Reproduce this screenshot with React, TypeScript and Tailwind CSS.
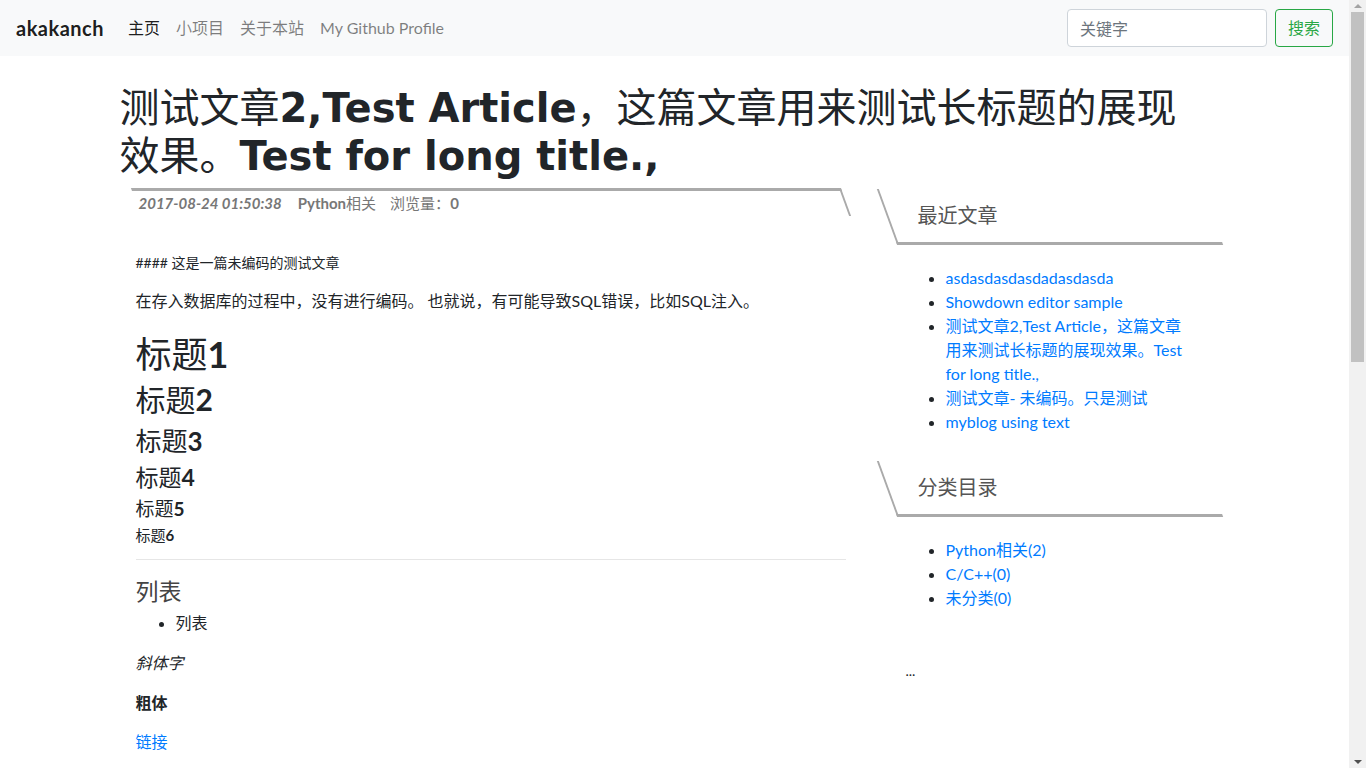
import React from "react";

const sans = "font-['Lato','Noto_Sans_CJK_SC',sans-serif]";

function SideHeading({ title }: { title: string }) {
  return (
    <div className="relative ml-[22px] mr-[32px] h-[56px]">
      <div className="absolute inset-0 skew-x-[20deg] border-b-[3px] border-l-2 border-[#aaaaaa]" />
      <div className="relative flex h-[51px] items-center pl-[31px] text-[20px] text-[#555] font-['Noto_Sans_CJK_SC',sans-serif]">
        {title}
      </div>
    </div>
  );
}

function Heading({ size, lead, mt, n }: { size: string; lead: string; mt: string; n: string }) {
  return (
    <div className={`${size} ${lead} ${mt}`}>
      <span className="font-normal">标题</span>
      <span className="font-bold">{n}</span>
    </div>
  );
}

export default function App() {
  const recent = [
    "asdasdasdasdadasdasda",
    "Showdown editor sample",
    "测试文章2,Test Article，这篇文章用来测试长标题的展现效果。Test for long title.,",
    "测试文章- 未编码。只是测试",
    "myblog using text",
  ];
  const cats = ["Python相关(2)", "C/C++(0)", "未分类(0)"];
  return (
    <div className={`min-h-[1610px] w-[1349px] bg-white text-[#212529] ${sans}`}>
      <nav className="flex h-14 items-center justify-between bg-[#f8f9fa] px-4">
        <div className="flex items-center">
          <span className="mr-4 text-[20px] font-bold tracking-[0.5px] text-black/90">akakanch</span>
          <span className="px-2 text-[16px] text-black/90">主页</span>
          <span className="px-2 text-[16px] text-black/50">小项目</span>
          <span className="px-2 text-[16px] text-black/50">关于本站</span>
          <span className="px-2 text-[16px] text-black/50">My Github Profile</span>
        </div>
        <div className="flex items-center">
          <input
            className="h-[38px] w-[200px] rounded border border-[#ced4da] bg-white px-3 text-[16px] text-[#495057] outline-none placeholder:text-[#6c757d]"
            placeholder="关键字"
          />
          <button className="ml-2 h-[38px] rounded border border-[#28a745] px-3 text-[16px] text-[#28a745]">
            搜索
          </button>
        </div>
      </nav>

      <div className="mx-auto w-[1140px] px-[15px]">
        <h1 className="mt-7 max-w-[1095px] text-[40px] font-bold leading-[48px] text-[#212529] font-['DejaVu_Sans','Noto_Sans_CJK_SC',sans-serif]">
          <span className="font-normal">测试文章</span>2,Test Article
          <span className="font-normal">，这篇文章用来测试长标题的展现效果。</span>Test for long title.,
        </h1>
      </div>

      <div className="mx-auto mt-2 flex w-[1140px]">
        <div className="w-[760px] shrink-0 pl-[31px] pr-[19px]">
          <div className="relative h-[28px]">
            <div className="absolute inset-0 skew-x-[20deg] border-r-2 border-t-[3px] border-[#aaaaaa]" />
            <div className="relative flex h-full items-center pl-[3px] pt-[2px] text-[15px] text-[#777]">
              <span className="mr-4 font-bold italic">2017-08-24 01:50:38</span>
              <span className="mr-[14px]">
                <b>Python</b>相关
              </span>
              <span>
                浏览量：<b>0</b>
              </span>
            </div>
          </div>

          <p className="mt-[36px] text-[14px] leading-[21px]">#### 这是一篇未编码的测试文章</p>
          <p className="mt-4 text-[16px] leading-[24px]">
            在存入数据库的过程中，没有进行编码。 也就说，有可能导致SQL错误，比如SQL注入。
          </p>
          <Heading size="text-[36px]" lead="leading-[43px]" mt="mt-[20px]" n="1" />
          <Heading size="text-[30px]" lead="leading-[36px]" mt="mt-[5px]" n="2" />
          <Heading size="text-[26px]" lead="leading-[31px]" mt="mt-[9px]" n="3" />
          <Heading size="text-[23px]" lead="leading-[28px]" mt="mt-[6px]" n="4" />
          <Heading size="text-[19px]" lead="leading-[23px]" mt="mt-[6px]" n="5" />
          <Heading size="text-[15px]" lead="leading-[18px]" mt="mt-[6px]" n="6" />
          <hr className="mt-[15px] border-t border-[#e6e6e6]" />
          <h3 className="mt-[17px] text-[23px] leading-[28px] text-[#444]">列表</h3>
          <ul className="mt-[6px] list-disc pl-10 text-[16px] leading-[24px]">
            <li>列表</li>
          </ul>
          <p className="mt-4 text-[16px] italic leading-[24px]">斜体字</p>
          <p className="mt-4 text-[16px] font-bold leading-[24px]">粗体</p>
          <p className="mt-[15px] text-[16px] leading-[24px] text-[#007bff]">链接</p>
        </div>

        <div className="w-[380px] shrink-0">
          <div className="pt-px">
            <SideHeading title="最近文章" />
          </div>
          <ul className="ml-[41px] mt-[21px] w-[285px] list-disc pl-10 text-[16px] leading-[24px]">
            {recent.map((r) => (
              <li key={r}>
                <span className="text-[#007bff]">{r}</span>
              </li>
            ))}
          </ul>
          <div className="mt-[27px]">
            <SideHeading title="分类目录" />
          </div>
          <ul className="ml-[41px] mt-[21px] list-disc pl-10 text-[16px] leading-[24px]">
            {cats.map((c) => (
              <li key={c}>
                <span className="text-[#007bff]">{c}</span>
              </li>
            ))}
          </ul>
          <p className="ml-[41px] mt-[50px] text-[14px] leading-[21px]">...</p>
        </div>
      </div>

      <div className="fixed right-0 top-0 flex h-screen w-[17px] flex-col items-center bg-[#f1f1f1]">
        <div className="flex h-[12px] items-center justify-center">
          <div className="h-0 w-0 border-x-[4px] border-b-[4px] border-x-transparent border-b-[#a3a3a3]" />
        </div>
        <div className="h-[350px] w-[13px] bg-[#c1c1c1]" />
        <div className="flex-1" />
        <div className="flex h-[12px] items-center justify-center">
          <div className="h-0 w-0 border-x-[4px] border-t-[4px] border-x-transparent border-t-[#505050]" />
        </div>
      </div>
    </div>
  );
}
